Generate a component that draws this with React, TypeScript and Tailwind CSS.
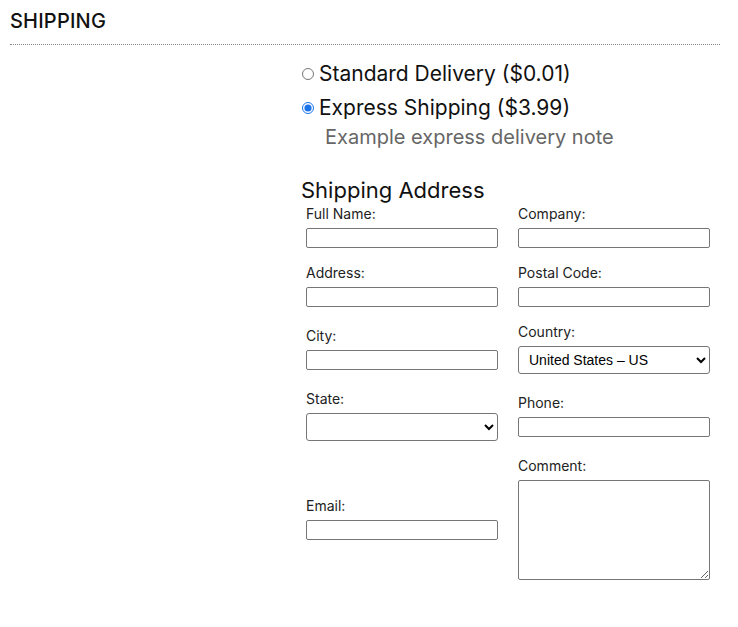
export default function App() {
  const inp = "h-[20px] w-[192px] border border-[#767676] rounded-[2px] bg-white";
  const sel = "h-[28px] w-[192px] border border-[#767676] rounded-[3px] bg-white text-[14px] pl-[6px] text-black";
  const lab = "text-[14px] leading-[18px] text-[#222] mb-[5px]";
  const font = { fontFamily: "Inter, 'Noto Sans', sans-serif" };
  return (
    <div className="w-[738px] h-[627px] bg-white text-[#111]" style={font}>
      <div className="pl-[10px] pr-[18px] pt-[8px]">
        <div className="text-[20px] font-medium leading-[26px] pb-[10px] border-b border-dotted border-[#888] tracking-[0.2px]">SHIPPING</div>
      </div>
      <div className="pl-[301px] pt-[14px]">
        <label className="flex items-center text-[21px] leading-[30px] pl-[1px]">
          <input type="radio" name="s" className="w-[12px] h-[12px] mr-[5px] accent-[#1a73e8]" />
          Standard Delivery ($0.01)
        </label>
        <label className="flex items-center text-[21px] leading-[30px] mt-[4px] pl-[1px]">
          <input type="radio" name="s" defaultChecked className="w-[12px] h-[12px] mr-[5px] accent-[#1a73e8]" />
          Express Shipping ($3.99)
        </label>
        <div className="pl-[24px] text-[20px] leading-[28px] text-[#666]">Example express delivery note</div>
        <div className="text-[22px] leading-[30px] mt-[24px]">Shipping Address</div>
        <div className="grid grid-cols-[192px_192px] gap-x-[20px] gap-y-[16px] pl-[5px] items-center">
          <div className="flex flex-col"><span className={lab}>Full Name:</span><input className={inp} /></div>
          <div className="flex flex-col"><span className={lab}>Company:</span><input className={inp} /></div>
          <div className="flex flex-col"><span className={lab}>Address:</span><input className={inp} /></div>
          <div className="flex flex-col"><span className={lab}>Postal Code:</span><input className={inp} /></div>
          <div className="flex flex-col"><span className={lab}>City:</span><input className={inp} /></div>
          <div className="flex flex-col"><span className={lab}>Country:</span>
            <select className={sel} style={{ fontFamily: "'Liberation Sans', Arial, sans-serif" }}><option>United States – US</option></select></div>
          <div className="flex flex-col"><span className={lab}>State:</span><select className={sel}><option></option></select></div>
          <div className="flex flex-col"><span className={lab}>Phone:</span><input className={inp} /></div>
          <div className="flex flex-col"><span className={lab}>Email:</span><input className={inp} /></div>
          <div className="flex flex-col"><span className={lab}>Comment:</span><textarea className="h-[100px] w-[192px] border border-[#767676] rounded-[2px]" /></div>
        </div>
      </div>
    </div>
  );
}
